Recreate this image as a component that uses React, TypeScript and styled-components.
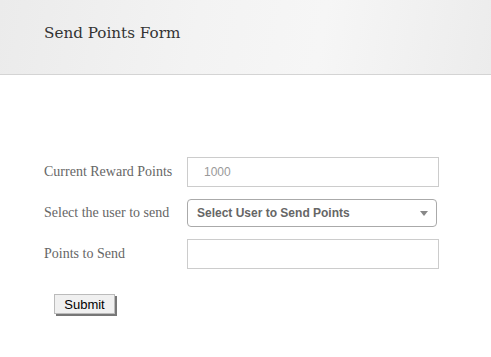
import React from 'react'
import styled, { createGlobalStyle } from 'styled-components'

const GlobalStyle = createGlobalStyle`
  html, body {
    margin: 0;
    padding: 0;
    background: #fff;
  }
`

const Page = styled.div`
  width: 491px;
  min-height: 357px;
  background: #fff;
`

const Header = styled.header`
  height: 75px;
  box-sizing: border-box;
  padding: 0 44px;
  display: flex;
  align-items: center;
  background: linear-gradient(100deg, #ebebeb 0%, #f3f3f3 40%, #f6f6f6 65%, #ececec 100%);
  border-bottom: 1px solid #d4d4d4;
`

const Title = styled.h1`
  margin: 0 0 9px;
  font-family: 'DejaVu Serif', 'Liberation Serif', serif;
  font-weight: normal;
  font-size: 15.2px;
  color: #333;
`

const Form = styled.form`
  padding: 82px 0 0 44px;
  display: flex;
  flex-direction: column;
`

const Row = styled.div`
  display: flex;
  align-items: center;
  height: 30px;
  margin-bottom: 11px;
`

const Label = styled.label`
  width: 143px;
  font-family: 'Liberation Serif', serif;
  font-size: 14px;
  color: #666;
`

const Input = styled.input`
  box-sizing: border-box;
  width: 252px;
  height: 30px;
  border: 1px solid #ccc;
  padding: 0 16px;
  font-family: 'Liberation Sans', Arial, sans-serif;
  font-size: 12px;
  color: #999;
  outline: none;
`

const SelectBox = styled.div`
  box-sizing: border-box;
  width: 250px;
  height: 28px;
  border: 1px solid #aaa;
  border-radius: 4px;
  display: flex;
  align-items: center;
  justify-content: space-between;
  padding: 0 8px 0 9px;
  font-family: 'Liberation Sans', Arial, sans-serif;
  font-weight: bold;
  font-size: 12px;
  color: #666;
`

const Caret = styled.span`
  width: 0;
  height: 0;
  border-left: 4px solid transparent;
  border-right: 4px solid transparent;
  border-top: 5px solid #888;
`

const Submit = styled.button`
  align-self: flex-start;
  margin: 14px 0 0 10px;
  width: 61px;
  height: 20px;
  padding: 0;
  background: #f0f0f0;
  border: 1px solid #bbb;
  box-shadow: 2px 2px 0 #777;
  font-family: 'Liberation Sans', Arial, sans-serif;
  font-size: 13px;
  color: #000;
`

export default function App() {
  return (
    <Page>
      <GlobalStyle />
      <Header>
        <Title>Send Points Form</Title>
      </Header>
      <Form onSubmit={e => e.preventDefault()}>
        <Row>
          <Label>Current Reward Points</Label>
          <Input value="1000" readOnly />
        </Row>
        <Row>
          <Label>Select the user to send</Label>
          <SelectBox>
            <span>Select User to Send Points</span>
            <Caret />
          </SelectBox>
        </Row>
        <Row>
          <Label>Points to Send</Label>
          <Input />
        </Row>
        <Submit type="submit">Submit</Submit>
      </Form>
    </Page>
  )
}
